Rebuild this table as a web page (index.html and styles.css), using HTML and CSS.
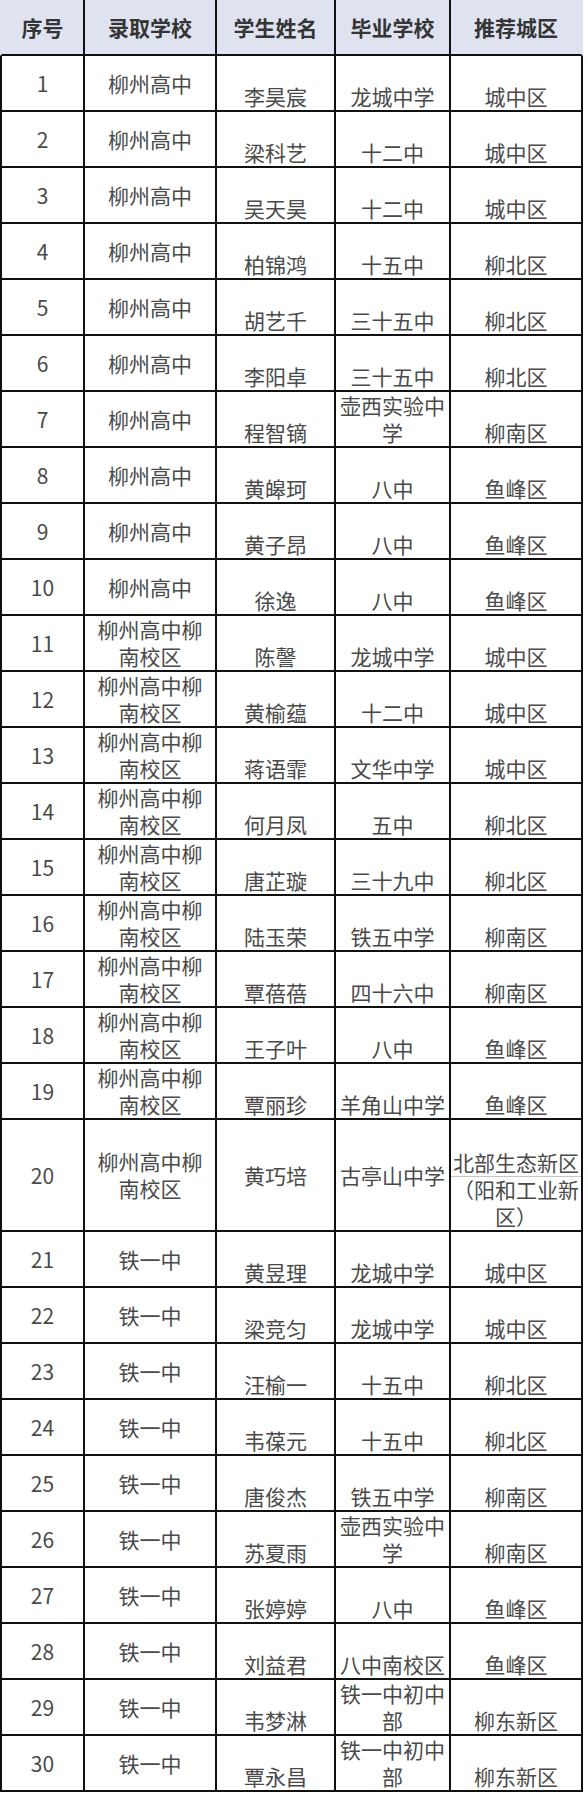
FILE: index.html
```html
<!DOCTYPE html>
<html lang="zh-CN">
<head>
<meta charset="utf-8">
<title>录取名单</title>
<link rel="stylesheet" href="styles.css">
</head>
<body>
<table class="list">
  <thead>
    <tr>
      <th class="c1">序号</th>
      <th class="c2">录取学校</th>
      <th class="c3">学生姓名</th>
      <th class="c4">毕业学校</th>
      <th class="c5">推荐城区</th>
    </tr>
  </thead>
  <tbody>
    <tr><td class="c1">1</td><td class="c2">柳州高中</td><td class="c3">李昊宸</td><td class="c4">龙城中学</td><td class="c5">城中区</td></tr>
    <tr><td class="c1">2</td><td class="c2">柳州高中</td><td class="c3">梁科艺</td><td class="c4">十二中</td><td class="c5">城中区</td></tr>
    <tr><td class="c1">3</td><td class="c2">柳州高中</td><td class="c3">吴天昊</td><td class="c4">十二中</td><td class="c5">城中区</td></tr>
    <tr><td class="c1">4</td><td class="c2">柳州高中</td><td class="c3">柏锦鸿</td><td class="c4">十五中</td><td class="c5">柳北区</td></tr>
    <tr><td class="c1">5</td><td class="c2">柳州高中</td><td class="c3">胡艺千</td><td class="c4">三十五中</td><td class="c5">柳北区</td></tr>
    <tr><td class="c1">6</td><td class="c2">柳州高中</td><td class="c3">李阳卓</td><td class="c4">三十五中</td><td class="c5">柳北区</td></tr>
    <tr><td class="c1">7</td><td class="c2">柳州高中</td><td class="c3">程智镝</td><td class="c4">壶西实验中学</td><td class="c5">柳南区</td></tr>
    <tr><td class="c1">8</td><td class="c2">柳州高中</td><td class="c3">黄皞珂</td><td class="c4">八中</td><td class="c5">鱼峰区</td></tr>
    <tr><td class="c1">9</td><td class="c2">柳州高中</td><td class="c3">黄子昂</td><td class="c4">八中</td><td class="c5">鱼峰区</td></tr>
    <tr><td class="c1">10</td><td class="c2">柳州高中</td><td class="c3">徐逸</td><td class="c4">八中</td><td class="c5">鱼峰区</td></tr>
    <tr><td class="c1">11</td><td class="c2">柳州高中柳南校区</td><td class="c3">陈謦</td><td class="c4">龙城中学</td><td class="c5">城中区</td></tr>
    <tr><td class="c1">12</td><td class="c2">柳州高中柳南校区</td><td class="c3">黄榆蕴</td><td class="c4">十二中</td><td class="c5">城中区</td></tr>
    <tr><td class="c1">13</td><td class="c2">柳州高中柳南校区</td><td class="c3">蒋语霏</td><td class="c4">文华中学</td><td class="c5">城中区</td></tr>
    <tr><td class="c1">14</td><td class="c2">柳州高中柳南校区</td><td class="c3">何月凤</td><td class="c4">五中</td><td class="c5">柳北区</td></tr>
    <tr><td class="c1">15</td><td class="c2">柳州高中柳南校区</td><td class="c3">唐芷璇</td><td class="c4">三十九中</td><td class="c5">柳北区</td></tr>
    <tr><td class="c1">16</td><td class="c2">柳州高中柳南校区</td><td class="c3">陆玉荣</td><td class="c4">铁五中学</td><td class="c5">柳南区</td></tr>
    <tr><td class="c1">17</td><td class="c2">柳州高中柳南校区</td><td class="c3">覃蓓蓓</td><td class="c4">四十六中</td><td class="c5">柳南区</td></tr>
    <tr><td class="c1">18</td><td class="c2">柳州高中柳南校区</td><td class="c3">王子叶</td><td class="c4">八中</td><td class="c5">鱼峰区</td></tr>
    <tr><td class="c1">19</td><td class="c2">柳州高中柳南校区</td><td class="c3">覃丽珍</td><td class="c4">羊角山中学</td><td class="c5">鱼峰区</td></tr>
    <tr class="tall"><td class="c1">20</td><td class="c2">柳州高中柳南校区</td><td class="c3">黄巧培</td><td class="c4">古亭山中学</td><td class="c5"><span class="split">北部生态新区</span>（阳和工业新区）</td></tr>
    <tr><td class="c1">21</td><td class="c2">铁一中</td><td class="c3">黄昱理</td><td class="c4">龙城中学</td><td class="c5">城中区</td></tr>
    <tr><td class="c1">22</td><td class="c2">铁一中</td><td class="c3">梁竞匀</td><td class="c4">龙城中学</td><td class="c5">城中区</td></tr>
    <tr><td class="c1">23</td><td class="c2">铁一中</td><td class="c3">汪榆一</td><td class="c4">十五中</td><td class="c5">柳北区</td></tr>
    <tr><td class="c1">24</td><td class="c2">铁一中</td><td class="c3">韦葆元</td><td class="c4">十五中</td><td class="c5">柳北区</td></tr>
    <tr><td class="c1">25</td><td class="c2">铁一中</td><td class="c3">唐俊杰</td><td class="c4">铁五中学</td><td class="c5">柳南区</td></tr>
    <tr><td class="c1">26</td><td class="c2">铁一中</td><td class="c3">苏夏雨</td><td class="c4">壶西实验中学</td><td class="c5">柳南区</td></tr>
    <tr><td class="c1">27</td><td class="c2">铁一中</td><td class="c3">张婷婷</td><td class="c4">八中</td><td class="c5">鱼峰区</td></tr>
    <tr><td class="c1">28</td><td class="c2">铁一中</td><td class="c3">刘益君</td><td class="c4">八中南校区</td><td class="c5">鱼峰区</td></tr>
    <tr><td class="c1">29</td><td class="c2">铁一中</td><td class="c3">韦梦淋</td><td class="c4">铁一中初中部</td><td class="c5">柳东新区</td></tr>
    <tr><td class="c1">30</td><td class="c2">铁一中</td><td class="c3">覃永昌</td><td class="c4">铁一中初中部</td><td class="c5">柳东新区</td></tr>
  </tbody>
</table>
</body>
</html>
```

FILE: styles.css
```css
html, body {
  margin: 0;
  padding: 0;
  background: #ffffff;
}

.list {
  border-collapse: separate;
  border-spacing: 0;
  table-layout: fixed;
  width: 583px;
  font-family: "Noto Sans CJK SC", "Microsoft YaHei", sans-serif;
  font-size: 21px;
  line-height: 27px;
  color: #4a4a4a;
}

.list th,
.list td {
  padding: 0;
  text-align: center;
  border-right: 2px solid #111;
  border-bottom: 2px solid #111;
  box-sizing: content-box;
}

.list th {
  height: 54px;
  background: #dfe3f0;
  color: #353535;
  font-weight: 700;
  vertical-align: middle;
}

.list td {
  height: 54px;
  background: #ffffff;
  vertical-align: bottom;
}

.list .c1 {
  width: 81px;
  border-left: 2px solid #111;
}
.list th.c1 {
  border-left-color: transparent;
}
.list th.c5 {
  border-right-color: transparent;
}

.list .c2 {
  width: 110px;
  padding: 0 10px;
}
.list .c3 { width: 117px; }
.list .c4 { width: 113px; }
.list .c5 { width: 130px; }

.list td.c1,
.list td.c2 {
  vertical-align: middle;
}

.list tr.tall td {
  height: 110px;
}
.list tr.tall td.c3,
.list tr.tall td.c4 {
  vertical-align: middle;
}

.split {
  display: block;
  box-shadow: 0 1px 0 #c4c4c4;
}
```
